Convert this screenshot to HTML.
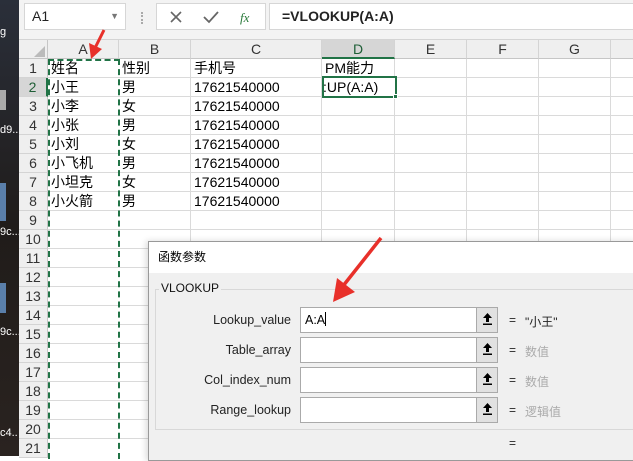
<!DOCTYPE html>
<html><head><meta charset="utf-8"><style>
*{margin:0;padding:0;box-sizing:border-box}
body{width:633px;height:456px;overflow:hidden;position:relative;background:#fff;font-family:"Liberation Sans","Noto Sans CJK SC",sans-serif}
.a{position:absolute}
.desk{left:0;top:0;width:19px;height:456px;background:linear-gradient(#2a2f3a,#201c1a 50%,#2a2320)}
.dt{position:absolute;left:0;color:#fff;font-size:11px}
.tb{left:19px;top:0;width:614px;height:40px;background:#f3f3f3;border-bottom:1px solid #d4d4d4}
.box{background:#fff;border:1px solid #d6d6d6}
.ch{top:40px;height:19px;background:#efefef;border-right:1px solid #d4d4d4;border-bottom:1px solid #c6c6c6;font-size:14px;color:#333;text-align:center;line-height:19px}
.rh{left:19px;width:29px;height:19px;background:#efefef;border-right:1px solid #c6c6c6;border-bottom:1px solid #d4d4d4;font-size:14px;color:#333;text-align:center;line-height:19px}
.hl{left:48px;width:585px;height:1px;background:#dadada}
.vl{top:59px;width:1px;height:397px;background:#dadada}
.c{font-size:14px;color:#000;line-height:19px;height:19px;white-space:nowrap}
.lab{width:140px;text-align:right;font-size:12.5px;color:#222;left:151px}
.inp{left:300px;width:198px;height:26px;background:#fff;border:1px solid #aaa}
.btn{position:absolute;right:0;top:0;width:21px;height:24px;background:#e1e1e1;border-left:1px solid #aaa}
.btn svg{position:absolute;left:5px;top:4px}
.eq{left:509px;font-size:12px;color:#222}
.val{left:525px;font-size:12px;color:#aaa}
</style></head><body>
<div class="a desk">
<div class="dt" style="top:26px">g</div>
<div class="dt" style="top:124px">d9..</div>
<div class="dt" style="top:226px">9c...</div>
<div class="dt" style="top:326px">9c...</div>
<div class="dt" style="top:427px">c4..</div>
<div class="a" style="left:0;top:90px;width:6px;height:20px;background:#aaa"></div>
<div class="a" style="left:0;top:183px;width:6px;height:38px;background:#5a7faa"></div>
<div class="a" style="left:0;top:283px;width:6px;height:30px;background:#5a7faa"></div>
</div>
<div class="a tb"></div>
<div class="a box" style="left:24px;top:3px;width:102px;height:27px;font-size:14px;line-height:25px;padding-left:7px;color:#222">A1<span class="a" style="right:6px;top:0;font-size:9px;color:#777">▼</span></div>
<div class="a" style="left:141px;top:12px;width:2px;height:12px;border-left:2px dotted #aaa"></div>
<div class="a box" style="left:156px;top:3px;width:110px;height:27px"></div>
<svg class="a" style="left:168px;top:8px" width="95" height="18"><path d="M3 4 L13 14 M13 4 L3 14" stroke="#666" stroke-width="1.6"/><path d="M36 9 L41 14 L50 4" stroke="#666" stroke-width="1.8" fill="none"/><text x="72" y="14" font-size="13" font-style="italic" font-family="Liberation Serif" fill="#2a7a3a">fx</text></svg>
<div class="a box" style="left:269px;top:3px;width:370px;height:27px;font-size:14px;font-weight:bold;line-height:25px;padding-left:12px;color:#222">=VLOOKUP(A:A)</div>

<div class="a" style="left:19px;top:40px;width:29px;height:19px;background:#efefef;border-right:1px solid #c6c6c6;border-bottom:1px solid #c6c6c6"></div>
<div class="a" style="left:34px;top:46px;width:0;height:0;border-left:11px solid transparent;border-bottom:11px solid #bbb"></div>
<div class="a ch" style="left:48px;width:71px">A</div>
<div class="a ch" style="left:119px;width:72px">B</div>
<div class="a ch" style="left:191px;width:131px">C</div>
<div class="a ch" style="left:322px;width:73px;background:#d6d6d6;border-bottom:2px solid #217346;color:#1e5e36">D</div>
<div class="a ch" style="left:395px;width:72px">E</div>
<div class="a ch" style="left:467px;width:72px">F</div>
<div class="a ch" style="left:539px;width:72px">G</div>
<div class="a ch" style="left:611px;width:30px"></div>

<div class="a rh" style="top:59px">1</div><div class="a rh" style="top:78px;background:#d6d6d6;color:#1e5e36;border-right:2px solid #217346">2</div><div class="a rh" style="top:97px">3</div><div class="a rh" style="top:116px">4</div><div class="a rh" style="top:135px">5</div><div class="a rh" style="top:154px">6</div><div class="a rh" style="top:173px">7</div><div class="a rh" style="top:192px">8</div><div class="a rh" style="top:211px">9</div><div class="a rh" style="top:230px">10</div><div class="a rh" style="top:249px">11</div><div class="a rh" style="top:268px">12</div><div class="a rh" style="top:287px">13</div><div class="a rh" style="top:306px">14</div><div class="a rh" style="top:325px">15</div><div class="a rh" style="top:344px">16</div><div class="a rh" style="top:363px">17</div><div class="a rh" style="top:382px">18</div><div class="a rh" style="top:401px">19</div><div class="a rh" style="top:420px">20</div><div class="a rh" style="top:439px">21</div>

<div class="a hl" style="top:77px"></div><div class="a hl" style="top:96px"></div><div class="a hl" style="top:115px"></div><div class="a hl" style="top:134px"></div><div class="a hl" style="top:153px"></div><div class="a hl" style="top:172px"></div><div class="a hl" style="top:191px"></div><div class="a hl" style="top:210px"></div><div class="a hl" style="top:229px"></div><div class="a hl" style="top:248px"></div><div class="a hl" style="top:267px"></div><div class="a hl" style="top:286px"></div><div class="a hl" style="top:305px"></div><div class="a hl" style="top:324px"></div><div class="a hl" style="top:343px"></div><div class="a hl" style="top:362px"></div><div class="a hl" style="top:381px"></div><div class="a hl" style="top:400px"></div><div class="a hl" style="top:419px"></div><div class="a hl" style="top:438px"></div>
<div class="a vl" style="left:190px"></div><div class="a vl" style="left:321px"></div><div class="a vl" style="left:394px"></div><div class="a vl" style="left:466px"></div><div class="a vl" style="left:538px"></div><div class="a vl" style="left:610px"></div>

<div class="a" style="left:48px;top:59px;width:72px;height:400px;border-left:2px dashed #217346;border-right:2px dashed #217346;border-top:2px dashed #217346"></div>

<div class="a c" style="left:51px;top:59px">姓名</div><div class="a c" style="left:122px;top:59px">性别</div><div class="a c" style="left:194px;top:59px">手机号</div><div class="a c" style="left:325px;top:59px">PM能力</div>
<div class="a c" style="left:51px;top:78px">小王</div><div class="a c" style="left:122px;top:78px">男</div><div class="a c" style="left:194px;top:78px">17621540000</div>
<div class="a c" style="left:51px;top:97px">小李</div><div class="a c" style="left:122px;top:97px">女</div><div class="a c" style="left:194px;top:97px">17621540000</div>
<div class="a c" style="left:51px;top:116px">小张</div><div class="a c" style="left:122px;top:116px">男</div><div class="a c" style="left:194px;top:116px">17621540000</div>
<div class="a c" style="left:51px;top:135px">小刘</div><div class="a c" style="left:122px;top:135px">女</div><div class="a c" style="left:194px;top:135px">17621540000</div>
<div class="a c" style="left:51px;top:154px">小飞机</div><div class="a c" style="left:122px;top:154px">男</div><div class="a c" style="left:194px;top:154px">17621540000</div>
<div class="a c" style="left:51px;top:173px">小坦克</div><div class="a c" style="left:122px;top:173px">女</div><div class="a c" style="left:194px;top:173px">17621540000</div>
<div class="a c" style="left:51px;top:192px">小火箭</div><div class="a c" style="left:122px;top:192px">男</div><div class="a c" style="left:194px;top:192px">17621540000</div>
<div class="a" style="left:322px;top:76px;width:75px;height:22px;border:2px solid #217346;background:#fff;overflow:hidden"><div class="c" style="margin-left:-1px;line-height:18px">:UP(A:A)</div></div>
<div class="a" style="left:393px;top:94px;width:5px;height:5px;background:#217346;border:1px solid #fff"></div>

<svg class="a" style="left:80px;top:28px" width="30" height="34"><path d="M24 2 L15 20" stroke="#e8302a" stroke-width="3"/><path d="M9 15 L11 31 L22 21 Z" fill="#e8302a"/></svg>

<div class="a" style="left:148px;top:241px;width:490px;height:220px;background:#f0f0f0;border:1px solid #999;box-shadow:-2px 0 6px rgba(0,0,0,.15)">
<div style="height:31px;background:#fff;font-size:12px;line-height:30px;padding-left:9px;color:#000">函数参数</div>
</div>
<div class="a" style="left:155px;top:289px;width:490px;height:141px;border:1px solid #d8d8d8"></div>
<div class="a" style="left:159px;top:281px;background:#f0f0f0;padding:0 2px;font-size:12px;color:#111">VLOOKUP</div>

<div class="a lab" style="top:313px">Lookup_value</div>
<div class="a lab" style="top:343px">Table_array</div>
<div class="a lab" style="top:373px">Col_index_num</div>
<div class="a lab" style="top:403px">Range_lookup</div>
<div class="a inp" style="top:307px;font-size:12.5px;line-height:24px;padding-left:4px">A:A<span style="display:inline-block;width:1px;height:14px;background:#000;vertical-align:-2px"></span><div class="btn"><svg width="11" height="14"><path d="M5.5 1 L1 6 H4 V10 H7 V6 H10 Z" fill="#000"/><rect x="1" y="11.5" width="9" height="1.5" fill="#000"/></svg></div></div>
<div class="a inp" style="top:337px"><div class="btn"><svg width="11" height="14"><path d="M5.5 1 L1 6 H4 V10 H7 V6 H10 Z" fill="#000"/><rect x="1" y="11.5" width="9" height="1.5" fill="#000"/></svg></div></div>
<div class="a inp" style="top:367px"><div class="btn"><svg width="11" height="14"><path d="M5.5 1 L1 6 H4 V10 H7 V6 H10 Z" fill="#000"/><rect x="1" y="11.5" width="9" height="1.5" fill="#000"/></svg></div></div>
<div class="a inp" style="top:397px"><div class="btn"><svg width="11" height="14"><path d="M5.5 1 L1 6 H4 V10 H7 V6 H10 Z" fill="#000"/><rect x="1" y="11.5" width="9" height="1.5" fill="#000"/></svg></div></div>
<div class="a eq" style="top:313px">=</div><div class="a" style="left:525px;top:313px;font-size:12px;color:#222">"小王"</div>
<div class="a eq" style="top:343px">=</div><div class="a val" style="top:343px">数值</div>
<div class="a eq" style="top:373px">=</div><div class="a val" style="top:373px">数值</div>
<div class="a eq" style="top:403px">=</div><div class="a val" style="top:403px">逻辑值</div>
<div class="a eq" style="top:436px">=</div>

<svg class="a" style="left:325px;top:234px" width="60" height="72"><path d="M56 4 L18 52" stroke="#e8302a" stroke-width="3.5"/><path d="M8 68 L12 44 L30 58 Z" fill="#e8302a"/></svg>
</body></html>
